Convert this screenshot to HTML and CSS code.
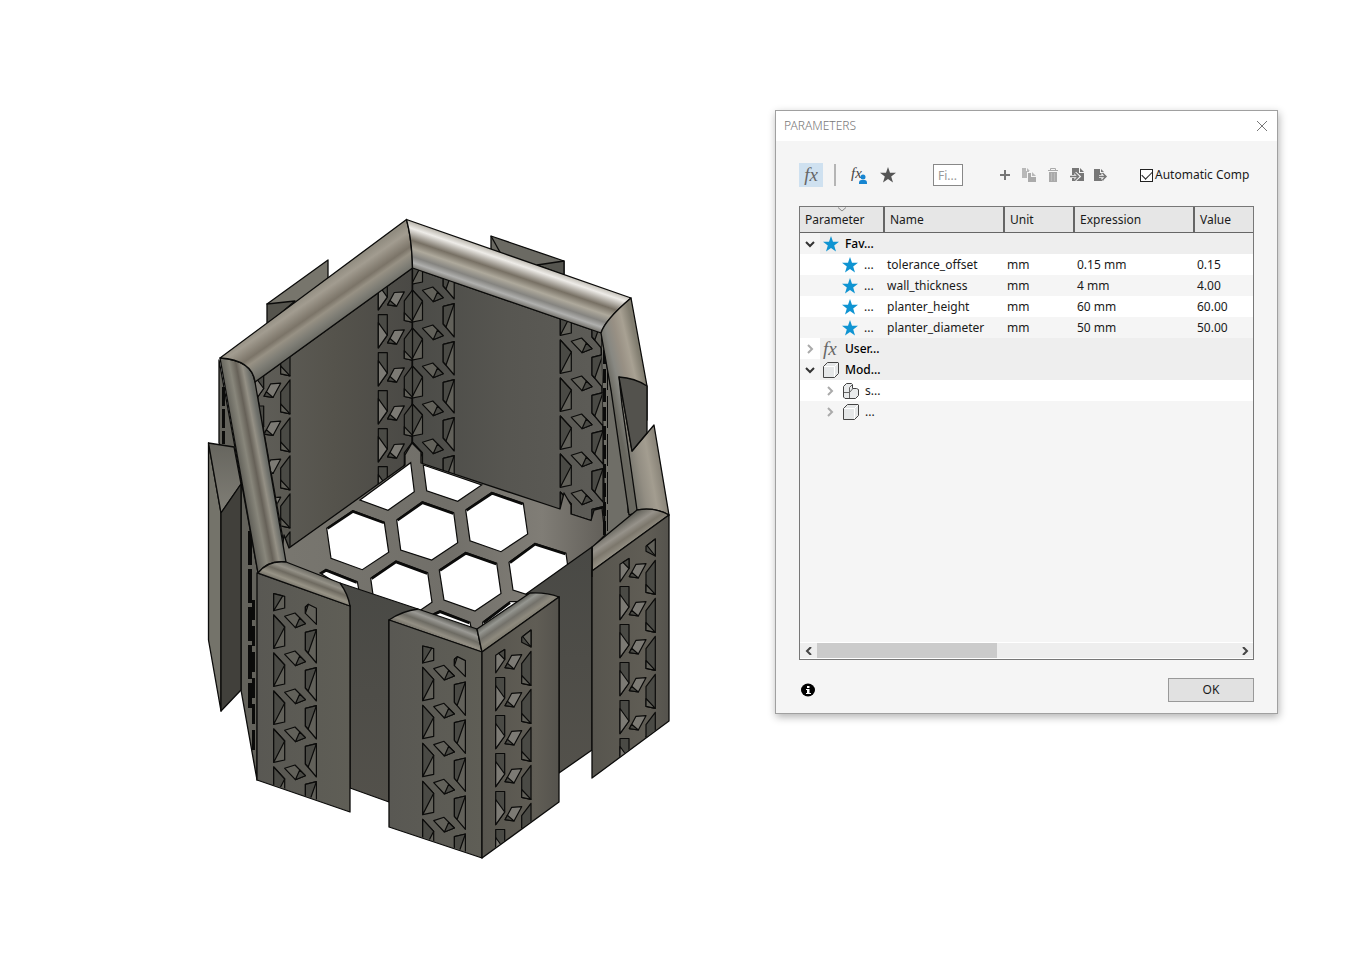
FILE: index.html
```html
<!DOCTYPE html>
<html lang="en">
<head>
<meta charset="utf-8">
<meta name="viewport" content="width=device-width, initial-scale=1">
<title>Parameters</title>
<link rel="stylesheet" href="styles.css">
</head>
<body>
<main class="workspace">
<svg class="model" viewBox="200 210 480 660" role="img" aria-label="Hexagonal planter model">
  <defs>
    <linearGradient id="rimBL" gradientUnits="userSpaceOnUse" x1="311" y1="290" x2="336" y2="326">
      <stop offset="0" stop-color="#928d81"/><stop offset=".18" stop-color="#a29c90"/><stop offset=".48" stop-color="#7b7468"/><stop offset=".6" stop-color="#979184"/><stop offset=".8" stop-color="#7e7d75"/><stop offset="1" stop-color="#686861"/>
    </linearGradient>
    <linearGradient id="rimBR" gradientUnits="userSpaceOnUse" x1="520" y1="259" x2="506" y2="300">
      <stop offset="0" stop-color="#bcb8af"/><stop offset=".14" stop-color="#eeece8"/><stop offset=".4" stop-color="#777064"/><stop offset=".58" stop-color="#aea99c"/><stop offset=".75" stop-color="#858480"/><stop offset=".88" stop-color="#b0b0ae"/><stop offset="1" stop-color="#77756f"/>
    </linearGradient>
    <linearGradient id="rimL" gradientUnits="userSpaceOnUse" x1="239" y1="468" x2="271" y2="462">
      <stop offset="0" stop-color="#605f58"/><stop offset=".3" stop-color="#88867b"/><stop offset=".5" stop-color="#666158"/><stop offset=".68" stop-color="#949085"/><stop offset=".86" stop-color="#6c6e69"/><stop offset="1" stop-color="#5e5e57"/>
    </linearGradient>
    <linearGradient id="rimR" gradientUnits="userSpaceOnUse" x1="606" y1="370" x2="641" y2="362">
      <stop offset="0" stop-color="#68675f"/><stop offset=".25" stop-color="#888882"/><stop offset=".5" stop-color="#989084"/><stop offset=".75" stop-color="#a8a193"/><stop offset="1" stop-color="#817d70"/>
    </linearGradient>
    <linearGradient id="rimR2" gradientUnits="userSpaceOnUse" x1="630" y1="480" x2="663" y2="474">
      <stop offset="0" stop-color="#74736b"/><stop offset=".35" stop-color="#938e83"/><stop offset=".65" stop-color="#a39d90"/><stop offset="1" stop-color="#858075"/>
    </linearGradient>
    <linearGradient id="rimFR" gradientUnits="userSpaceOnUse" x1="611" y1="528" x2="625" y2="549">
      <stop offset="0" stop-color="#605f57"/><stop offset=".4" stop-color="#96928a"/><stop offset=".65" stop-color="#7c776c"/><stop offset="1" stop-color="#9a968a"/>
    </linearGradient>
    <linearGradient id="rimMR" gradientUnits="userSpaceOnUse" x1="502" y1="611" x2="515" y2="630">
      <stop offset="0" stop-color="#565650"/><stop offset=".25" stop-color="#959690"/><stop offset=".5" stop-color="#73716a"/><stop offset=".75" stop-color="#8e8a7e"/><stop offset="1" stop-color="#79766a"/>
    </linearGradient>
    <linearGradient id="rimML" gradientUnits="userSpaceOnUse" x1="448" y1="619" x2="440" y2="640">
      <stop offset="0" stop-color="#565650"/><stop offset=".25" stop-color="#9b9a95"/><stop offset=".5" stop-color="#6d6b63"/><stop offset=".75" stop-color="#938f84"/><stop offset="1" stop-color="#6c6960"/>
    </linearGradient>
    <linearGradient id="rimFL" gradientUnits="userSpaceOnUse" x1="313" y1="571" x2="305" y2="592">
      <stop offset="0" stop-color="#62615a"/><stop offset=".3" stop-color="#949187"/><stop offset=".5" stop-color="#6e6a60"/><stop offset=".75" stop-color="#979386"/><stop offset="1" stop-color="#6b685f"/>
    </linearGradient>
    <linearGradient id="wallL" x1="0" y1="0" x2="1" y2="0"><stop offset="0" stop-color="#5f5e58"/><stop offset=".5" stop-color="#55534c"/><stop offset="1" stop-color="#4a4945"/></linearGradient>
    <linearGradient id="wallR" x1="0" y1="0" x2="1" y2="0"><stop offset="0" stop-color="#4b4b47"/><stop offset=".5" stop-color="#575651"/><stop offset="1" stop-color="#5d5c57"/></linearGradient>
    <linearGradient id="panel" x1="0" y1="0" x2="1" y2="0"><stop offset="0" stop-color="#595853"/><stop offset="1" stop-color="#5f5e56"/></linearGradient>
    <linearGradient id="panelB" x1="0" y1="0" x2="1" y2="0"><stop offset="0" stop-color="#57554e"/><stop offset=".7" stop-color="#605d55"/><stop offset="1" stop-color="#55534d"/></linearGradient>
    <linearGradient id="recess" x1="0" y1="0" x2="0" y2="1"><stop offset="0" stop-color="#494945"/><stop offset="1" stop-color="#53514b"/></linearGradient>
    <linearGradient id="ear" x1="0" y1="0" x2="0" y2="1"><stop offset="0" stop-color="#66655e"/><stop offset="1" stop-color="#807e76"/></linearGradient>
    <linearGradient id="floor" gradientUnits="userSpaceOnUse" x1="290" y1="0" x2="605" y2="0"><stop offset="0" stop-color="#78766f"/><stop offset=".5" stop-color="#716f69"/><stop offset=".8" stop-color="#807d76"/><stop offset="1" stop-color="#625f59"/></linearGradient>

    <g id="aCuts" class="cut">
      <path d="M0 0l11 12v19L0 33.3z"/><path class="shade" d="M0 33.3L11 12 0 0z"/>
      <path d="M11 1.3L21.3-2l10.4 10.7-10 4z"/><path class="shade" d="M21.7 12.7L26 3l5.7 5.7z"/>
      <path d="M31.7 17.3l11-2.6V48l-11-13z"/><path class="shade" d="M42.7 14.7L34.5 38 31.7 35V17.3z"/>
    </g>
    <g id="aHead" class="cut">
      <path d="M0-21.3l11 2.6V-7L0-4.3z"/><path class="shade" d="M0-4.3l9-14.8-9-2.2z"/>
      <path d="M31.7-8l3-2.7 8 4V9.3l-11-11z"/><path class="shade" d="M31.7-1.7l3-9-3 2.7z"/>
    </g>
    <g id="aStrip">
      <use href="#aCuts"/><use href="#aCuts" y="38"/><use href="#aCuts" y="76"/><use href="#aCuts" y="114"/><use href="#aCuts" y="152"/>
    </g>
    <g id="bLeft" class="cut"><path class="shade" d="M0 0h9v20.5L0 33.2z"/><path class="light" d="M0 8l9 12.5L0 33.2z"/></g>
    <g id="bRest" class="cut">
      <path class="light" d="M9.3 28.2L16 15.8l10-.6-7.7 14.3z"/><path class="shade" d="M9.3 28.2l2.4-4.400 6.600 5.700z"/>
      <path class="shade" d="M26 24.2l9.3-12.4v34l-9.3-2z"/><path d="M26 36l9.3 9.8-9.300-2z"/>
    </g>
    <g id="bCuts"><use href="#bLeft"/><use href="#bRest"/></g>
    <g id="bHead">
      <use href="#bRest" y="-38"/>
      <g class="cut"><path class="light" d="M0-22.2L9-28v10L0-4.7z"/><path class="shade" d="M3-24.2l6 6.200V-28z"/><path class="shade" d="M26-40.2l9.3-7.3v17L26-35.2z"/><path d="M27-41l8.3 10.5V-47.500z"/></g>
    </g>
    <g id="bStrip">
      <use href="#bCuts"/><use href="#bCuts" y="38"/><use href="#bCuts" y="76"/><use href="#bCuts" y="114"/><use href="#bCuts" y="152"/>
    </g>
    <clipPath id="cBL"><path d="M255 382L412.500 268V456L405 465 289 548 284 540z"/></clipPath>
    <clipPath id="cBR"><path d="M412.500 268L601 333 605 508 594 510 591 520 571 514V505L564 493 560 509 412 460z"/></clipPath>
    <clipPath id="cF1"><path d="M257 575L350 606V811L257 779z"/></clipPath>
    <clipPath id="cF2"><path d="M389 620L482 652V857L389 826z"/></clipPath>
    <clipPath id="cF3"><path d="M482 652L559 597V801L482 857z"/></clipPath>
    <clipPath id="cF4"><path d="M592 571L669 515V720L592 777z"/></clipPath>
  </defs>

  <g class="edge">
    <!-- tabs behind the rim -->
    <path fill="#77756c" d="M267 304L328 260V280L290 310z"/><path fill="#55544d" d="M267 304l28-3-28 24z"/>
    <path fill="#6b6a63" d="M491 236L564 261V280L491 255z"/><path fill="#55554f" d="M564 261l-27 4 27 10z"/><path d="M491 236l10 18"/>

    <!-- interior walls -->
    <path fill="url(#wallL)" d="M255 382L412.500 268V463L289 548 284 545z"/>
    <path fill="url(#wallR)" d="M412.500 268L601 333 605 525 412 463z"/>
    <path fill="#6f6e67" d="M601 333l10 55 26 125-32 25z"/>
  </g>
  <g clip-path="url(#cBL)">
    <use href="#bStrip" x="378.300" y="276.700"/><use href="#bCuts" x="378.300" y="466.700"/>
    <use href="#bStrip" x="254.700" y="330"/><use href="#bCuts" x="254.700" y="520"/>
  </g>
  <g clip-path="url(#cBR)">
    <use href="#aCuts" x="411.500" y="251"/><use href="#aStrip" x="411.500" y="289"/><use href="#aCuts" x="411.500" y="479"/>
    <use href="#aCuts" x="560.300" y="302"/><use href="#aStrip" x="560.300" y="340"/>
  </g>
  <path class="line" d="M412.500 268V456"/>

  <!-- floor and its openings -->
  <path class="edge" fill="url(#floor)" d="M284 535L289 548 405 465V455L412 443 421 452V463L560 509 564 493 571 505V514L591 520.500 594 510 602 508 605 535 560 580 477 632 340 590 280 566z"/>
  <path class="slots" d="M604.500 350V535" stroke-dasharray="14 5"/>
  <path class="slots slots-thin" d="M607.500 358V531" stroke-dasharray="32 6"/>
  <path class="slots" d="M629 481v32" stroke-dasharray="14 4"/>
  <g class="hole">
    <path d="M360 500l50.700-37.300 3.600 29L388 510.300z"/>
    <path d="M423.300 465l58.400 20-24 16.300-31-10.600z"/>
    <path d="M326.700 528.300l26-17.600 31.600 11.600 4.400 30-26.400 17.400L331 558.300z"/>
    <path d="M396.700 520l25.600-18.300 31.400 11 4 30-26 17.300-31-10z"/>
    <path d="M465.700 510l26-17.700 31.600 11 4.400 30.700-26.700 17.700-31-11z"/>
    <path d="M370.700 578.300L396 561l31.700 11.700 4.300 29.600L406 620l-31-11z"/>
    <path d="M439.300 570l26.400-17.700 31 11 4.300 30.200-26 17.500-31-11z"/>
    <path d="M509 562.300l26-19 31 10 4 29.700-26 17-31-10z"/>
    <path d="M320 573l6-3.700 31.300 12.400 3 16z"/>
    <path d="M433 614l7-3.300 30 11.600 2 10-20-5z"/>
    <path d="M482.700 622.300l27.300-20.600 10 0-24 24-13 8z"/>
  </g>
  <g class="lip">
    <path d="M327.500 528.500L353 511.500l31 11.400"/><path d="M397.500 520.300l25-17.600 30.800 10.800"/><path d="M466.500 510.300l25.500-17 30.800 10.800"/>
    <path d="M371.500 578.600L396 562l31.200 11.500"/><path d="M440 570.300l25.700-17 30.500 10.800"/><path d="M510 562.600l25-18.300 30.500 9.800"/>
    <path d="M321 573.500l5-3.200 30.800 12.200"/><path d="M434 614.500l6-2.800 29.500 11.400"/><path d="M483.500 622.600l26.500-20"/>
  </g>

  <g class="edge">
    <!-- left side -->
    <path fill="#63625b" d="M219 360L258 573 257 780 241 690V485L219 443z"/>
    <path fill="#74736a" d="M208.500 443l12.500 70V711L208.500 640z"/>
    <path fill="url(#ear)" d="M208.500 443l25.500 4 7 37-20 29z"/>
    <path fill="#41403b" d="M221 513l20-29V690l-20 21z"/>
  </g>
  <path class="slots" d="M223.500 387V444" stroke-dasharray="19 3"/>
  <path class="slots slots-wide" d="M250 531V708" stroke-dasharray="34 4"/>
  <path class="slots" d="M253.500 600V756" stroke-dasharray="20 6"/>
  <g class="edge">
    <!-- rim -->
    <path fill="url(#rimL)" d="M220 358Q252 360 255 382L286 562Q268 560 258 573z"/>
    <path fill="url(#rimBL)" d="M220 358L406.500 219.500Q412 240 412.500 268L255 382Q252 360 220 358z"/>
    <path fill="url(#rimBR)" d="M406.500 219.500L631 298Q605 320 601 333L412.500 268Q412 240 406.500 219.500z"/>
    <path fill="url(#rimR)" d="M631 298L647 386V420L627 425 632 451 640 511 629 515 611 390 601 333Q605 320 631 298z"/>
    <path fill="url(#rimR2)" d="M632 451L654 425 669 515Q655 507 637 510L622 405 619 377z"/>
    <path fill="#53524d" d="M619 377Q635 378 647 386V433L632 451z"/>
    <path fill="url(#rimFR)" d="M592 547L637 510Q655 507 669 515L592 571z"/>

    <!-- recessed faces -->
    <path fill="url(#recess)" d="M340 583L418 609 389 620V802L350 788V606z"/>
    <path fill="url(#recess)" d="M526 594L592 547V750L559 773V597z"/>

    <!-- front panels -->
    <path fill="url(#panel)" d="M257 573L350 606V812L257 780z"/>
    <path fill="url(#rimFL)" d="M258 573Q268 560 286 562L340 583Q348 594 350 606z"/>
    <path fill="url(#rimML)" d="M389 620Q402 611 418 609L477 629 482 652z"/>
    <path fill="url(#rimMR)" d="M477 629L530 593Q546 592 559 597L482 652z"/>
    <path fill="url(#panel)" d="M389 620L482 652V858L389 827z"/>
    <path fill="url(#panelB)" d="M482 652L559 597V802L482 858z"/>
    <path fill="url(#panelB)" d="M592 571L669 515V721L592 778z"/>
    <path d="M592 547v30"/>
  </g>
  <g clip-path="url(#cF1)"><use href="#aHead" x="273.700" y="615"/><use href="#aStrip" x="273.700" y="615"/></g>
  <g clip-path="url(#cF2)"><use href="#aHead" x="422.700" y="667.300"/><use href="#aStrip" x="422.700" y="667.300"/></g>
  <g clip-path="url(#cF3)"><use href="#bHead" x="495.700" y="677.500"/><use href="#bStrip" x="495.700" y="677.500"/></g>
  <g clip-path="url(#cF4)"><use href="#bHead" x="620" y="586.500"/><use href="#bStrip" x="620" y="586.500"/></g>
</svg>

<section class="dialog" aria-labelledby="dialog-title">
  <header class="dialog-header">
    <h1 id="dialog-title" class="dialog-title">PARAMETERS</h1>
    <button class="icon-button" aria-label="Close"><svg width="12" height="12" viewBox="0 0 12 12"><path d="M1 1l10 10M11 1L1 11" fill="none" stroke="#777"/></svg></button>
  </header>
  <div class="dialog-body">
    <div class="toolbar">
      <button class="icon-button fx-button" aria-label="Show all parameters"><span class="fx">fx</span></button>
      <span class="separator"></span>
      <button class="icon-button user-button" aria-label="User parameters"><svg width="18" height="18" viewBox="0 0 18 18"><text class="fx-small" x="1" y="12">fx</text><circle cx="13" cy="11" r="2.500" fill="#1685d1"/><path d="M9 18v-1q0-3 2.500-3h3q2.500 0 2.500 3v1z" fill="#1685d1"/></svg></button>
      <button class="icon-button" aria-label="Favorites"><svg width="16" height="16" viewBox="0 0 16 16"><path d="M8 0l2 5.700 6 .1-4.800 3.700L13 15.500 8 12l-5 3.500 1.800-6L0 5.800l6-.1z" fill="#555"/></svg></button>
      <input class="filter" type="text" placeholder="Fi..." aria-label="Filter">
      <div class="actions">
        <button class="icon-button" aria-label="Add"><svg width="14" height="14" viewBox="0 0 14 14"><path d="M7 2v10M2 7h10" stroke="#777" stroke-width="2"/></svg></button>
        <button class="icon-button" aria-label="Copy"><svg width="14" height="14" viewBox="0 0 14 14"><path d="M0 0h4v3h3v1H5v6H0z" fill="#b8b8b8"/><path d="M5 0l3 3H5zM10 4l4 4h-4z" fill="#b8b8b8"/><path d="M6 5h3v4h5v5H6z" fill="#aaa"/></svg></button>
        <button class="icon-button" aria-label="Delete"><svg width="14" height="14" viewBox="0 0 14 14"><path d="M4.500 2V.5h5V2M2 2.500h10" fill="none" stroke="#aaa" stroke-width="1"/><path d="M3 4h8v10H3z" fill="#aaa"/><path d="M5.500 5v8M8.500 5v8" stroke="#bbb"/></svg></button>
        <button class="icon-button" aria-label="Import"><svg width="14" height="14" viewBox="0 0 14 14"><path d="M2 0h7v5h5v8H2z" fill="#777"/><path d="M10 0l4 4h-4z" fill="#777"/><path d="M0 8.500h8M5 5l4 3.500L5 12" fill="none" stroke="#f5f5f5" stroke-width="3"/><path d="M0 8.500h8M5 5l3.500 3.500L5 12" fill="none" stroke="#777" stroke-width="1.500"/></svg></button>
        <button class="icon-button" aria-label="Export"><svg width="14" height="14" viewBox="0 0 14 14"><path d="M0 1h6v4h4v8H0z" fill="#777"/><path d="M7 1l3 3H7z" fill="#777"/><path d="M5 8.500h8M8 5l4 3.500L8 12" fill="none" stroke="#f5f5f5" stroke-width="3"/><path d="M5 8.500h7M8.500 5L12 8.500 8.500 12" fill="none" stroke="#777" stroke-width="1.500"/></svg></button>
      </div>
      <div class="auto"><input type="checkbox" id="auto" class="check" checked><label for="auto">Automatic Comp</label></div>
    </div>

    <div class="table-frame">
      <table class="params">
        <colgroup><col class="col-param"><col class="col-name"><col class="col-unit"><col class="col-expr"><col></colgroup>
        <thead><tr>
          <th scope="col"><svg class="sort" width="8" height="5" viewBox="0 0 8 5"><path d="M0 .5l4 3.500 4-3.500" fill="none" stroke="#888"/></svg>Parameter</th>
          <th scope="col">Name</th><th scope="col">Unit</th><th scope="col">Expression</th><th scope="col">Value</th>
        </tr></thead>
        <tbody>
          <tr class="group"><td colspan="5"><div class="tree"><svg class="chev" viewBox="0 0 10 10"><path d="M1 3l4 4 4-4" fill="none" stroke="#333" stroke-width="2"/></svg><svg class="glyph" viewBox="0 0 16 16"><path class="blue" d="M8 0l2 5.700 6 .1-4.800 3.700L13 15.500 8 12l-5 3.500 1.800-6L0 5.800l6-.1z"/></svg><span>Fav...</span></div></td></tr>
          <tr><td><div class="tree leaf"><svg class="glyph" viewBox="0 0 16 16"><path class="blue" d="M8 0l2 5.700 6 .1-4.800 3.700L13 15.500 8 12l-5 3.500 1.800-6L0 5.800l6-.1z"/></svg><span>...</span></div></td><td>tolerance_offset</td><td>mm</td><td>0.15 mm</td><td>0.15</td></tr>
          <tr class="alt"><td><div class="tree leaf"><svg class="glyph" viewBox="0 0 16 16"><path class="blue" d="M8 0l2 5.700 6 .1-4.800 3.700L13 15.500 8 12l-5 3.500 1.800-6L0 5.800l6-.1z"/></svg><span>...</span></div></td><td>wall_thickness</td><td>mm</td><td>4 mm</td><td>4.00</td></tr>
          <tr><td><div class="tree leaf"><svg class="glyph" viewBox="0 0 16 16"><path class="blue" d="M8 0l2 5.700 6 .1-4.800 3.700L13 15.500 8 12l-5 3.500 1.800-6L0 5.800l6-.1z"/></svg><span>...</span></div></td><td>planter_height</td><td>mm</td><td>60 mm</td><td>60.00</td></tr>
          <tr class="alt"><td><div class="tree leaf"><svg class="glyph" viewBox="0 0 16 16"><path class="blue" d="M8 0l2 5.700 6 .1-4.800 3.700L13 15.500 8 12l-5 3.500 1.800-6L0 5.800l6-.1z"/></svg><span>...</span></div></td><td>planter_diameter</td><td>mm</td><td>50 mm</td><td>50.00</td></tr>
          <tr class="group closed"><td colspan="5"><div class="tree"><svg class="chev" viewBox="0 0 10 10"><path d="M3 1l4 4-4 4" fill="none" stroke="#aaa" stroke-width="2"/></svg><span class="fx glyph">fx</span><span>User...</span></div></td></tr>
          <tr class="group"><td colspan="5"><div class="tree"><svg class="chev" viewBox="0 0 10 10"><path d="M1 3l4 4 4-4" fill="none" stroke="#333" stroke-width="2"/></svg><svg class="glyph" viewBox="0 0 16 16"><path d="M.5 4.500l4-4h11v11l-4 4H.5z" fill="#e5e7e8" stroke="#444"/><path d="M1 4.500h10.500V15M11.500 4.500l4-4" fill="none" stroke="#fff"/></svg><span>Mod...</span></div></td></tr>
          <tr><td colspan="5"><div class="tree child"><svg class="chev" viewBox="0 0 10 10"><path d="M3 1l4 4-4 4" fill="none" stroke="#aaa" stroke-width="2"/></svg><svg class="glyph" viewBox="0 0 16 16"><path d="M.5 3.500l3-3h5l1 1v4h4l2 1v6l-3 3H2l-1.500-1.500z" fill="#e9ebec" stroke="#444"/><path d="M6.500 15V4.500L9 2M6.500 9.500L9.500 6M1 9.500h5" fill="none" stroke="#666"/></svg><span>s...</span></div></td></tr>
          <tr class="alt"><td colspan="5"><div class="tree child"><svg class="chev" viewBox="0 0 10 10"><path d="M3 1l4 4-4 4" fill="none" stroke="#aaa" stroke-width="2"/></svg><svg class="glyph" viewBox="0 0 16 16"><path d="M.5 4.500l4-4h11v11l-4 4H.5z" fill="#e5e7e8" stroke="#444"/><path d="M1 4.500h10.500V15M11.500 4.500l4-4" fill="none" stroke="#fff"/></svg><span>...</span></div></td></tr>
        </tbody>
      </table>
      <div class="scrollbar">
        <button class="icon-button arrow" aria-label="Scroll left"><svg width="8" height="8" viewBox="0 0 8 8"><path d="M6 0L2 4l4 4" fill="none" stroke="#444" stroke-width="2"/></svg></button>
        <div class="track"><div class="thumb"></div></div>
        <button class="icon-button arrow" aria-label="Scroll right"><svg width="8" height="8" viewBox="0 0 8 8"><path d="M2 0l4 4-4 4" fill="none" stroke="#444" stroke-width="2"/></svg></button>
      </div>
    </div>

    <footer class="dialog-footer">
      <button class="icon-button" aria-label="Information"><svg width="14" height="14" viewBox="0 0 14 14"><ellipse cx="7" cy="7" rx="7" ry="6.500" fill="#000"/><path d="M6 3h2.500v2H6zM5 6h3.500v4H10v1H5v-1h1V7H5z" fill="#fff"/></svg></button>
      <button class="ok">OK</button>
    </footer>
  </div>
</section>
</main>
</body>
</html>
```
FILE: styles.css
```css
* { box-sizing: border-box; }

body {
  margin: 0;
  background: #fff;
  color: #1a1a1a;
  font: 12px/20px "Noto Sans", "Open Sans", sans-serif;
}

button, input { font: inherit; color: inherit; }

.workspace {
  display: flex;
  justify-content: space-between;
  align-items: flex-start;
  gap: 24px;
  min-height: 100vh;
  padding: 110px 82px 80px 200px;
}

/* 3D model */
.model { flex: 0 1 480px; min-width: 0; margin-top: 100px; }
.edge { stroke: #0b0b0a; stroke-width: 1.3; stroke-linejoin: round; }
.edge path:not([fill]) { fill: none; }
.line { stroke: #0b0b0a; stroke-width: 1.3; fill: none; }
.cut path { fill: #62615a; stroke: #0b0b0a; stroke-width: 1.2; stroke-linejoin: round; }
.cut .shade { fill: #4a4a45; }
.cut .light { fill: #7c7a74; }
.slots { fill: none; stroke: #0b0b0a; stroke-width: 3; }
.slots-thin { stroke-width: 1; }
.slots-wide { stroke-width: 4; }
.hole { fill: #fff; stroke: #0b0b0a; stroke-width: 1.2; }
.lip { fill: none; stroke: #0b0b0a; stroke-width: 2.6; }

/* Dialog */
.dialog {
  flex: 0 0 503px;
  min-width: 0;
  background: #f5f5f5;
  border: 1px solid #a0a0a0;
  box-shadow: 1px 3px 8px rgba(0, 0, 0, .3);
}
.dialog-header {
  display: flex;
  align-items: center;
  justify-content: space-between;
  height: 30px;
  padding: 0 9px 0 8px;
  background: #fff;
}
.dialog-title { margin: 0; font-size: 12px; font-weight: 300; color: #777; }
.dialog-body { padding: 22px 23px 11px; }

.icon-button {
  display: grid;
  place-items: center;
  flex: none;
  padding: 0;
  border: 0;
  background: none;
}

.toolbar { display: flex; align-items: center; height: 24px; }
.fx {
  font: italic 19px/20px "Liberation Serif", serif;
  color: #666;
}
.fx-button { width: 24px; height: 24px; background: #cfe1f0; }
.separator { width: 2px; height: 22px; margin: 0 14px 0 11px; background: #b5b5b5; }
.fx-small { font: italic 15px "Liberation Serif", serif; fill: #444; }
.user-button { margin-right: 12px; }
.filter {
  flex: none;
  width: 30px;
  height: 22px;
  margin: 0 35px 0 37px;
  padding: 0 4px;
  border: 1px solid #888;
  background: #fff;
}
.filter::placeholder { color: #999; opacity: 1; }
.actions { display: flex; gap: 10px; }
.auto {
  display: flex;
  align-items: center;
  gap: 2px;
  margin-left: 32px;
  white-space: nowrap;
}
.check {
  appearance: none;
  flex: none;
  display: grid;
  place-items: center;
  width: 13px;
  height: 13px;
  margin: 0;
  border: 1px solid #222;
  background: #fff;
}
.check:checked::before {
  content: "";
  width: 9px;
  height: 5px;
  margin-bottom: 3px;
  border: solid #222;
  border-width: 0 0 1px 1px;
  transform: rotate(-45deg);
}

.table-frame {
  display: flex;
  flex-direction: column;
  justify-content: space-between;
  min-height: 454px;
  margin-top: 19px;
  border: 1px solid #777;
}
.params {
  width: 100%;
  table-layout: fixed;
  border-collapse: separate;
  border-spacing: 0;
}
.col-param { width: 85px; }
.col-name { width: 120px; }
.col-unit { width: 70px; }
.col-expr { width: 120px; }
.params th {
  position: relative;
  height: 26px;
  padding: 0 5px;
  border: solid #666;
  border-width: 0 2px 1px 0;
  background: #e6e6e6;
  font-weight: 400;
  text-align: left;
}
.params th:last-child { border-right: 0; }
.sort { position: absolute; left: 38px; top: 0; }
.params td { height: 21px; padding: 0 2px; white-space: nowrap; background: #fff; }
.params .alt td { background: #f5f5f5; }
.params .group td { background: linear-gradient(90deg, #f5f5f5 20px, #eee 20px); font-weight: 500; color: #000; }
.params .closed td { background: linear-gradient(90deg, #fff 20px, #eee 20px); }
.params td:first-child { padding: 0; }
.tree { display: flex; align-items: center; height: 21px; padding-left: 5px; }
.child { padding-left: 25px; }
.leaf { padding-left: 42px; }
.chev { width: 10px; height: 10px; margin-right: 8px; }
.glyph { width: 16px; height: 16px; margin-right: 6px; line-height: 16px; }
.blue { fill: #0f94d2; }

.scrollbar { display: flex; height: 17px; border: solid #fff; border-width: 1px 0; background: #eee; }
.arrow { width: 17px; }
.track { flex: 1; }
.thumb { width: 43%; height: 100%; background: #cbcbcb; }

.dialog-footer {
  display: flex;
  align-items: center;
  justify-content: space-between;
  margin-top: 18px;
  padding-left: 2px;
}
.ok {
  width: 86px;
  height: 24px;
  padding: 0;
  border: 1px solid #999;
  background: #e1e1e1;
}
```
